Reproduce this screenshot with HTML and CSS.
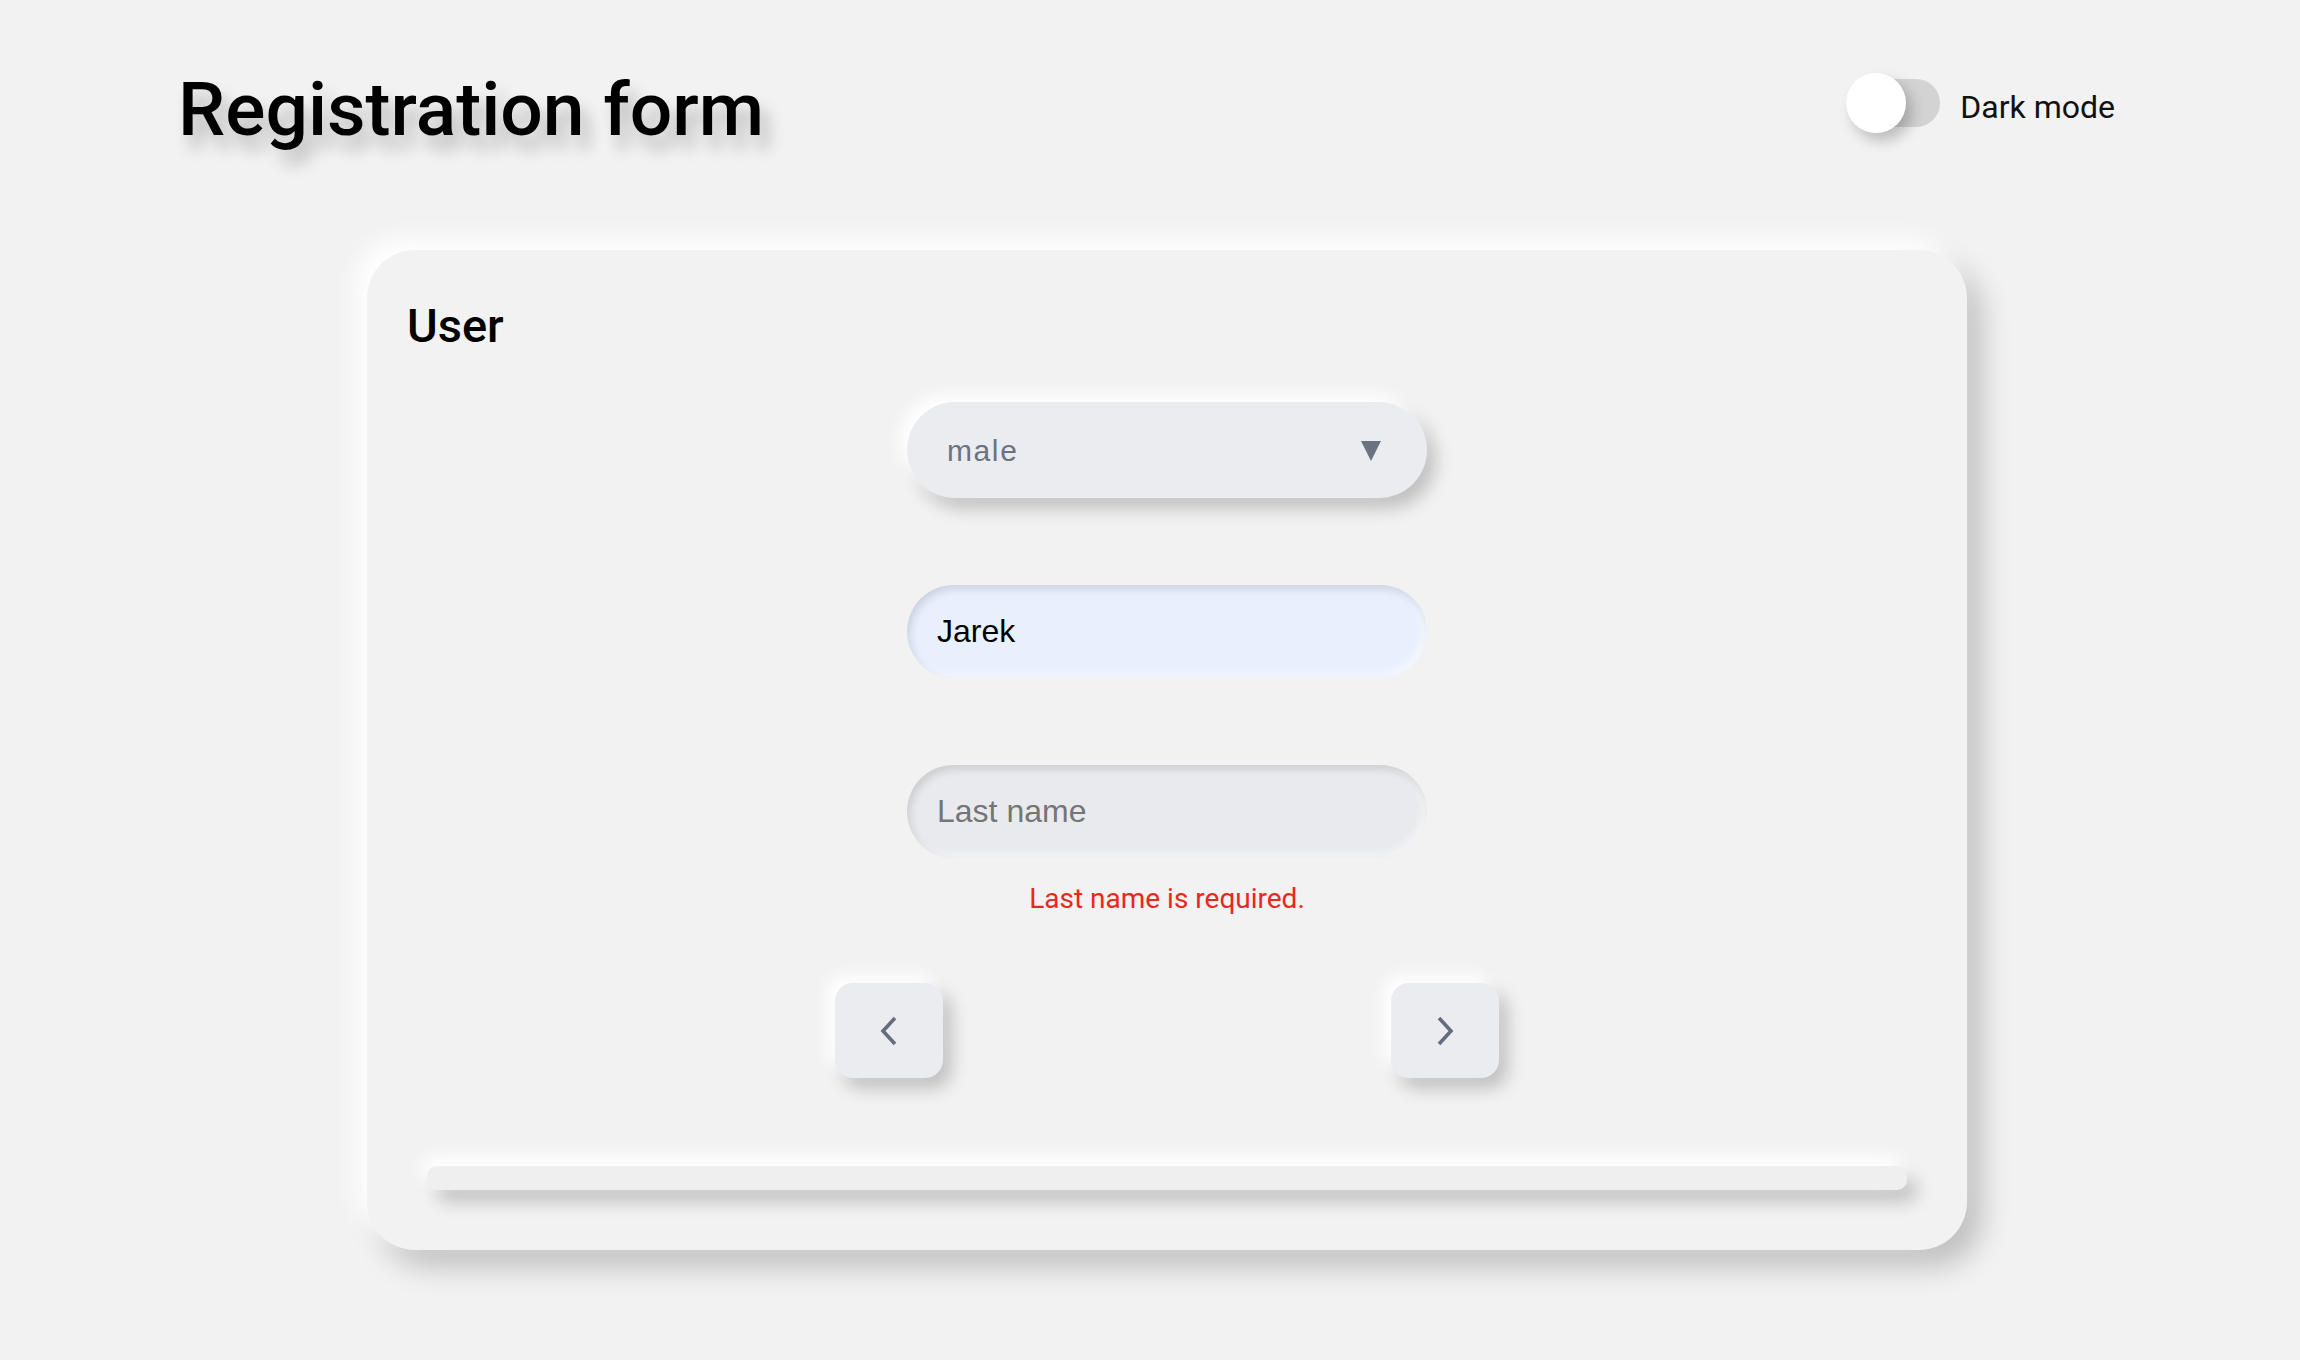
FILE: index.html
```html
<!DOCTYPE html>
<html lang="en">
<head>
<meta charset="utf-8">
<title>Registration form</title>
<link rel="stylesheet" href="styles.css">
</head>
<body>
<header class="topbar">
  <h1 class="title">Registration form</h1>
  <label class="mode">
    <span class="switch"><span class="knob"></span></span>
    <span class="mode-label">Dark mode</span>
  </label>
</header>
<main class="card">
  <h2 class="card-title">User</h2>
  <form class="fields">
    <div class="select">
      <span class="select-value">male</span>
      <svg class="select-arrow" width="20" height="20" viewBox="0 0 20 20"><polygon points="0,0 20,0 10,20" fill="#6b7280"/></svg>
    </div>
    <input class="input autofill" type="text" value="Jarek">
    <input class="input" type="text" placeholder="Last name">
    <p class="error">Last name is required.</p>
  </form>
  <div class="nav">
    <button class="nav-btn" type="button" aria-label="Previous">
      <svg width="20" height="30" viewBox="0 0 20 30"><polyline points="16,2 4,15 16,28" fill="none" stroke="#656c7e" stroke-width="3.6" stroke-linecap="butt" stroke-linejoin="miter"/></svg>
    </button>
    <button class="nav-btn" type="button" aria-label="Next">
      <svg width="20" height="30" viewBox="0 0 20 30"><polyline points="4,2 16,15 4,28" fill="none" stroke="#656c7e" stroke-width="3.6" stroke-linecap="butt" stroke-linejoin="miter"/></svg>
    </button>
  </div>
  <div class="progress"></div>
</main>
</body>
</html>
```
FILE: styles.css
```css
* { box-sizing: border-box; }

html, body {
  margin: 0;
  background: #f2f2f2;
}

body {
  font-family: Roboto, "Liberation Sans", sans-serif;
  color: #000;
  width: 2300px;
  height: 1360px;
  overflow: hidden;
}

.topbar {
  display: flex;
  justify-content: space-between;
  align-items: flex-start;
  padding: 72px 185px 0 178px;
}

.title {
  margin: 0;
  font-size: 75px;
  line-height: 75px;
  font-weight: 500;
  white-space: nowrap;
  text-shadow: 8px 14px 16px rgba(0, 0, 0, 0.24);
}

.mode {
  display: flex;
  align-items: center;
  gap: 20px;
  margin-top: 1px;
  height: 60px;
}

.switch {
  position: relative;
  display: block;
  width: 90px;
  height: 48px;
  margin-left: 4px;
  border-radius: 24px;
  background: #d3d3d3;
}

.knob {
  position: absolute;
  left: -4px;
  top: -6px;
  width: 60px;
  height: 60px;
  border-radius: 50%;
  background: #fff;
  box-shadow: 6px 8px 14px rgba(0, 0, 0, 0.22);
}

.mode-label {
  font-size: 32px;
  line-height: 36px;
  padding-top: 8px;
  color: #111;
}

.card {
  width: 1600px;
  margin: 103px 0 0 367px;
  padding: 52px 40px 60px;
  background: #f2f2f2;
  border-radius: 48px;
  box-shadow: -12px -12px 24px #ffffff, 14px 16px 30px rgba(0, 0, 0, 0.22);
}

.card-title {
  margin: 0;
  font-size: 47px;
  line-height: 48px;
  font-weight: 500;
}

.fields {
  width: 520px;
  margin: 52px auto 0;
  display: flex;
  flex-direction: column;
}

.select {
  height: 96px;
  border-radius: 48px;
  background: #ebecef;
  display: flex;
  align-items: center;
  justify-content: space-between;
  padding: 2px 46px 0 40px;
  box-shadow: -8px -8px 16px #ffffff, 8px 10px 18px rgba(0, 0, 0, 0.22);
}

.select-value {
  font-family: "Liberation Sans", Arial, sans-serif;
  font-size: 30px;
  letter-spacing: 1.6px;
  color: #6b7280;
}

.select-arrow { display: block; }

.input {
  display: block;
  width: 100%;
  height: 93px;
  margin: 87px 0 0;
  border: none;
  outline: none;
  border-radius: 47px;
  padding: 0 30px;
  font-family: "Liberation Sans", Arial, sans-serif;
  font-size: 32px;
  color: #000;
  background: #e9eaed;
  box-shadow: inset 3px 4px 8px rgba(0, 0, 0, 0.13), inset -4px -4px 8px rgba(255, 255, 255, 0.6);
}

.input.autofill {
  background: #e8f0fe;
}

.input::placeholder {
  color: #757575;
}

.error {
  margin: 25px 0 0;
  text-align: center;
  font-size: 28px;
  line-height: 32px;
  color: #e8281c;
}

.nav {
  display: flex;
  justify-content: center;
  gap: 448px;
  margin-top: 68px;
}

.nav-btn {
  width: 108px;
  height: 95px;
  border: none;
  padding: 0;
  border-radius: 18px;
  background: #ebecef;
  display: flex;
  align-items: center;
  justify-content: center;
  box-shadow: -8px -8px 16px #ffffff, 8px 10px 18px rgba(0, 0, 0, 0.22);
}

.nav-btn svg { display: block; }

.progress {
  height: 24px;
  margin: 88px 20px 0;
  border-radius: 10px;
  background: #efefef;
  box-shadow: -6px -10px 18px #ffffff, 10px 12px 18px rgba(0, 0, 0, 0.2);
}
```
